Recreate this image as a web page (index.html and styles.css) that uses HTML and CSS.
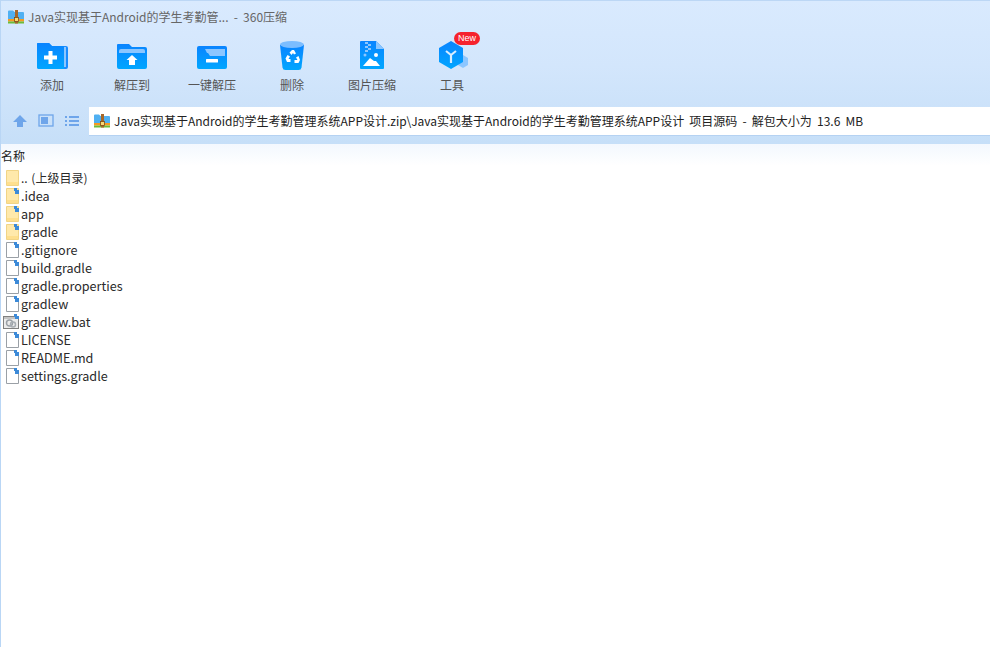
FILE: index.html
```html
<!DOCTYPE html>
<html lang="zh-CN">
<head>
<meta charset="utf-8">
<title>360压缩</title>
<link rel="stylesheet" href="styles.css">
</head>
<body>
<svg class="defs" width="0" height="0" aria-hidden="true">
  <defs>
    <linearGradient id="blue" x1="0" y1="0" x2="0" y2="1"><stop offset="0" stop-color="#0a84ff"/><stop offset="1" stop-color="#00a6ff"/></linearGradient>
    <symbol id="zip" viewBox="0 0 16 16">
      <path d="M0 2.500q0-1 1-1h4l1.500 1.500H15q1 0 1 1V10H0z" fill="#4fb0f2"/>
      <rect y="10" width="16" height="2.500" fill="#f59a23"/>
      <rect y="12.500" width="16" height="2" fill="#6dbb3a"/>
      <rect x="7" y="1" width="3" height="13.500" fill="#a5672a"/>
      <rect x="6.500" y="8.500" width="4" height="4" fill="#f7d774" stroke="#7a4a16" stroke-width=".8"/>
    </symbol>
    <symbol id="folderfile" viewBox="0 0 16 16">
      <path d="M3.500.5H15.500V15.500H3.500z" fill="#ffe9ab" stroke="#f1d486"/>
      <rect x="4" y="12" width="11" height="3" fill="#fedf8e"/>
    </symbol>
    <symbol id="corner" viewBox="0 0 16 16">
      <path d="M11 0h3v2h2v4h-4V3h-1z" fill="#3c8ad8"/>
    </symbol>
    <symbol id="page" viewBox="0 0 16 16">
      <path d="M3.500.5H11L15.500 5V15.500H3.500z" fill="#fff" stroke="#9aa0a6"/>
      <path d="M11 0h3v2h2v4h-4V3h-1z" fill="#3c8ad8"/>
    </symbol>
    <symbol id="bat" viewBox="0 0 16 16">
      <rect x=".5" y="2.500" width="15" height="12" fill="#ececec" stroke="#808080"/>
      <rect x="1" y="3" width="14" height="2" fill="#c4c4c4"/>
      <circle cx="6.500" cy="9" r="3" fill="none" stroke="#9aa0a6" stroke-width="1.500"/>
      <circle cx="10" cy="10.500" r="2.500" fill="none" stroke="#a8adb3" stroke-width="1.500"/>
      <path d="M11 0h3v2h2v3h-4V3h-1z" fill="#3c8ad8"/>
    </symbol>
  </defs>
</svg>
<div class="app">
  <header class="chrome">
    <div class="titlebar">
      <svg class="zip-icon"><use href="#zip"/></svg>
      <span class="title">Java实现基于Android的学生考勤管... - 360压缩</span>
    </div>
    <nav class="toolbar">
      <div class="tool">
        <svg class="tool-icon" viewBox="0 0 32 32">
          <path d="M1 4q0-1 1-1h11l3 3h14q2 0 2 2v19q0 2-2 2H3q-2 0-2-2z" fill="#1a8cff"/>
          <rect x="26" y="7" width="4" height="20" fill="#8cc6ff"/>
          <path d="M1 4q0-1 1-1h11l3 3h11q1 0 1 1v22H3q-2 0-2-2z" fill="url(#blue)"/>
          <path d="M12.500 11h4v4.500H21v4h-4.500V24h-4v-4.500H8v-4h4.500z" fill="#fff"/>
        </svg>
        <span>添加</span>
      </div>
      <div class="tool">
        <svg class="tool-icon" viewBox="0 0 32 32">
          <path d="M1 5q0-1 1-1h11l3 3h13q2 0 2 2v18q0 2-2 2H3q-2 0-2-2z" fill="url(#blue)"/>
          <path d="M3 11q0-2 2-2h22q2 0 2 2v2H3z" fill="#8cc6ff"/>
          <path d="M16 15l5.500 5H19v5h-6v-5h-2.500z" fill="#fff"/>
        </svg>
        <span>解压到</span>
      </div>
      <div class="tool">
        <svg class="tool-icon" viewBox="0 0 32 32">
          <rect x="1" y="6" width="30" height="23" rx="2" fill="url(#blue)"/>
          <path d="M9 9h20v7H14l-2-3H11z" fill="#8cc6ff"/>
          <rect x="10" y="19" width="12" height="3.500" rx=".5" fill="#fff"/>
        </svg>
        <span>一键解压</span>
      </div>
      <div class="tool">
        <svg class="tool-icon" viewBox="0 0 32 32">
          <path d="M4 5l2.500 22.500q.3 2.500 3 2.500h13q2.700 0 3-2.500L28 5z" fill="url(#blue)"/>
          <ellipse cx="16" cy="4.500" rx="12" ry="3.500" fill="#7cbdff"/>
          <path d="M13.500 12.500l2.500-2.500h2l2 3.500-2 1-1-1.500-1.500 2zM9.500 18.500l2-3.500 2.500 1.500-1.500 2.500h2v3h-3.500zM22.500 16l1.500 4-1.500 3h-4v-3h3l-1.500-2.500z" fill="#fff"/>
        </svg>
        <span>删除</span>
      </div>
      <div class="tool">
        <svg class="tool-icon" viewBox="0 0 32 32">
          <path d="M5 1h15l8 8v19q0 1-1 1H5q-1 0-1-1V2q0-1 1-1z" fill="url(#blue)"/>
          <path d="M20 1l8 8h-8z" fill="#8cc6ff"/>
          <path d="M9 2h3v2H9zM12 4h3v2h-3zM9 6h3v2H9zM12 8h3v2h-3zM9 10h3v2H9z" fill="#8cc6ff"/>
          <circle cx="9" cy="15" r="1.500" fill="#8cc6ff"/>
          <circle cx="20" cy="15" r="2" fill="#fff"/>
          <path d="M7 26l7-8 4 3 2 0 4 5z" fill="#fff"/>
        </svg>
        <span>图片压缩</span>
      </div>
      <div class="tool">
        <svg class="tool-icon" viewBox="0 0 32 32">
          <path d="M27 15l5 3v7l-5 3-5-3z" fill="#8cc6ff"/>
          <path d="M15 1l12 7v14l-12 7-12-7V8z" fill="url(#blue)"/>
          <path d="M15 15l-5-4M15 15l5-4M15 15v8" stroke="#d7ecff" stroke-width="2.200" fill="none"/>
        </svg>
        <span>工具</span>
        <b class="badge">New</b>
      </div>
    </nav>
    <div class="pathbar">
      <div class="nav-icons">
        <svg class="nav-icon" viewBox="0 0 16 16"><path d="M8 2l7 7h-4v5H5V9H1z" fill="#6ea5ea"/></svg>
        <svg class="nav-icon" viewBox="0 0 16 16"><rect x="1" y="2" width="14" height="11" fill="none" stroke="#6ea5ea" stroke-width="1.300"/><rect x="3" y="4" width="7" height="7" fill="#6ea5ea"/></svg>
        <svg class="nav-icon" viewBox="0 0 16 16"><path d="M1 3h2v2H1zM5 3h10v2H5zM1 7h2v2H1zM5 7h10v2H5zM1 11h2v2H1zM5 11h10v2H5z" fill="#6ea5ea"/></svg>
      </div>
      <div class="path">
        <svg class="zip-icon"><use href="#zip"/></svg>
        <span>Java实现基于Android的学生考勤管理系统APP设计.zip\Java实现基于Android的学生考勤管理系统APP设计 项目源码 - 解包大小为 13.6 MB</span>
      </div>
    </div>
  </header>
  <main class="list">
    <div class="col-head">名称</div>
    <div class="row"><svg class="file"><use href="#folderfile"/></svg><span class="up">.. (上级目录)</span></div>
    <div class="row"><svg class="file"><use href="#folderfile"/><use href="#corner"/></svg><span>.idea</span></div>
    <div class="row"><svg class="file"><use href="#folderfile"/><use href="#corner"/></svg><span>app</span></div>
    <div class="row"><svg class="file"><use href="#folderfile"/><use href="#corner"/></svg><span>gradle</span></div>
    <div class="row"><svg class="file"><use href="#page"/></svg><span>.gitignore</span></div>
    <div class="row"><svg class="file"><use href="#page"/></svg><span>build.gradle</span></div>
    <div class="row"><svg class="file"><use href="#page"/></svg><span>gradle.properties</span></div>
    <div class="row"><svg class="file"><use href="#page"/></svg><span>gradlew</span></div>
    <div class="row"><svg class="file"><use href="#bat"/></svg><span>gradlew.bat</span></div>
    <div class="row"><svg class="file"><use href="#page"/></svg><span>LICENSE</span></div>
    <div class="row"><svg class="file"><use href="#page"/></svg><span>README.md</span></div>
    <div class="row"><svg class="file"><use href="#page"/></svg><span>settings.gradle</span></div>
  </main>
</div>
</body>
</html>
```
FILE: styles.css
```css
* { box-sizing: border-box; }
html, body { margin: 0; height: 100%; overflow: hidden; background: #fff; }
body { font: 12.6px/18px "Noto Sans CJK SC", "Noto Sans", sans-serif; color: #222; }
.defs { position: absolute; }
.app { height: 647px; display: flex; flex-direction: column; border-left: 1px solid #b9d6f5; }
.chrome { height: 144px; flex: none; border-top: 1px solid #bcd7f5; background: linear-gradient(#d9eafe, #d3e6fc 45%, #c6dff8 100%); }
.titlebar { height: 31px; display: flex; align-items: center; padding-left: 7px; gap: 4px; color: #666; font-size: 12px; word-spacing: 2.5px; }
.zip-icon { width: 16px; height: 16px; flex: none; }
.toolbar { height: 75px; display: flex; padding-left: 11px; }
.tool { position: relative; width: 80px; display: flex; flex-direction: column; align-items: center; padding-top: 8px; font-size: 12px; color: #555; }
.tool-icon { width: 32px; height: 32px; margin-bottom: 4px; }
.badge { position: absolute; top: 0; left: 42px; width: 26px; height: 13px; border-radius: 7px; background: #f5222d; color: #fff; font: 400 9px/13px "Liberation Sans", sans-serif; text-align: center; }
.pathbar { display: flex; height: 30px; }
.nav-icons { width: 88px; display: flex; align-items: center; padding: 0 0 2px 11px; gap: 10px; }
.nav-icon { width: 16px; height: 16px; flex: none; }
.path { flex: 1; height: 29px; display: flex; align-items: center; gap: 4px; padding-left: 5px; background: #fff; border-bottom: 1px solid #b5d2f2; white-space: nowrap; font-size: 12px; color: #222; word-spacing: 2.5px; }
.list { flex: 1; background: linear-gradient(#f3f8fe, #fff 22px); }
.col-head { height: 25px; line-height: 23px; font-size: 12px; }
.row { height: 18px; display: flex; align-items: center; padding-left: 1px; gap: 2px; color: #2a2a2a; }
.file { width: 16px; height: 16px; flex: none; margin-left: 1px; }
.up { font-size: 12px; word-spacing: 1px; }
```
